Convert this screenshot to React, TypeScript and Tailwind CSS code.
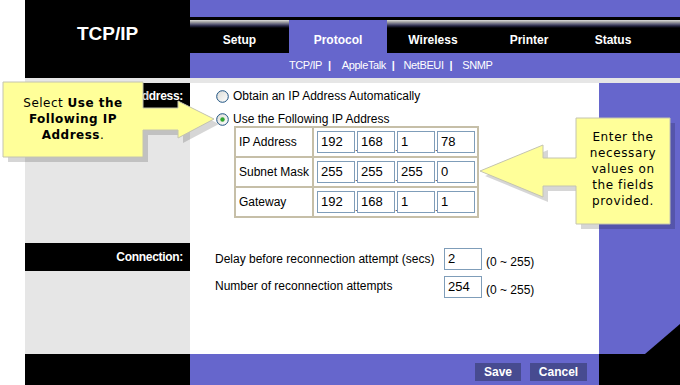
import type { ReactNode } from "react";

const tabs = [
  { label: "Setup", w: "w-[99px]", active: false },
  { label: "Protocol", w: "w-[98px]", active: true },
  { label: "Wireless", w: "w-[92px]", active: false },
  { label: "Printer", w: "w-[100px]", active: false },
  { label: "Status", w: "w-[68px]", active: false },
];

const ipRows = [
  { label: "IP Address", values: ["192", "168", "1", "78"] },
  { label: "Subnet Mask", values: ["255", "255", "255", "0"] },
  { label: "Gateway", values: ["192", "168", "1", "1"] },
];

function Radio({ checked }: { checked?: boolean }) {
  return (
    <svg width="13" height="13" viewBox="0 0 13 13" className="shrink-0">
      <defs>
        <linearGradient id={checked ? "rg1" : "rg0"} x1="0" y1="0" x2="1" y2="1">
          <stop offset="0" stopColor="#dcdcd6" />
          <stop offset="1" stopColor="#ffffff" />
        </linearGradient>
      </defs>
      <circle cx="6.5" cy="6.5" r="5.8" fill={`url(#${checked ? "rg1" : "rg0"})`} stroke="#1c5180" strokeWidth="1" />
      {checked ? <circle cx="6.5" cy="6.5" r="2.2" fill="#2fa52f" /> : null}
    </svg>
  );
}

function Field({ value, width = "w-[38px]" }: { value: string; width?: string }) {
  return (
    <div
      className={`${width} h-[22px] border border-[#7f9db9] bg-white pl-[3px] text-[13px] leading-[20px] text-black`}
    >
      {value}
    </div>
  );
}

function Callout({ children }: { children: ReactNode }) {
  return <>{children}</>;
}

export default function App() {
  return (
    <div className="flex h-[385px] w-[680px] overflow-hidden bg-white font-['Liberation_Sans',Arial,sans-serif] text-[12px] text-black relative">
      <div className="w-[25px] shrink-0 bg-white" />
      <div className="flex w-[655px] flex-col">
        {/* header */}
        <div className="flex h-[78px]">
          <div className="flex w-[165px] items-center justify-center bg-black pb-[10px] text-[19px] font-bold text-white">
            TCP/IP
          </div>
          <div className="flex w-[490px] flex-col">
            <div className="h-[17px] bg-[#6666cc]" />
            <div className="h-[3px] bg-black" />
            <div className="flex h-[33px] bg-black">
              {tabs.map((t) => (
                <div
                  key={t.label}
                  className={`${t.w} flex items-center justify-center pt-[7px] text-[12px] font-bold text-white ${
                    t.active
                      ? "bg-[#6666cc]"
                      : "bg-[linear-gradient(to_bottom,#dcdcdc_0px,#a4a4a4_2px,#64647e_4px,#23233f_6px,#000000_8px)]"
                  }`}
                >
                  {t.label}
                </div>
              ))}
              <div className="flex-1 bg-[linear-gradient(to_bottom,#dcdcdc_0px,#a4a4a4_2px,#64647e_4px,#23233f_6px,#000000_8px)]" />
            </div>
            <div className="flex h-[25px] items-start bg-[#6666cc] pl-[99px] pt-[4px] text-[11px] tracking-[-0.4px] text-white">
              <span>TCP/IP</span>
              <span className="ml-[6px] font-bold">|</span>
              <span className="ml-[11px]">AppleTalk</span>
              <span className="ml-[6px] font-bold">|</span>
              <span className="ml-[9px]">NetBEUI</span>
              <span className="ml-[6px] font-bold">|</span>
              <span className="ml-[10px]">SNMP</span>
            </div>
          </div>
        </div>

        {/* strip */}
        <div className="h-[5px] bg-[#e6e6e6]" />

        {/* body */}
        <div className="grid h-[271px] grid-cols-[165px_409px_81px]">
          <div className="flex flex-col bg-[#e6e6e6]">
            <div className="flex h-[26px] items-center justify-end bg-black pr-[7px] text-[12px] font-bold tracking-[-0.3px] text-white">
              IP Address:
            </div>
            <div className="h-[134px]" />
            <div className="flex h-[28px] items-center justify-end bg-black pr-[7px] text-[12px] font-bold tracking-[-0.3px] text-white">
              Connection:
            </div>
          </div>

          <div className="flex flex-col bg-white pl-[26px] pt-[6px]">
            <div className="flex h-[14px] items-center gap-[4px]">
              <Radio />
              <span>Obtain an IP Address Automatically</span>
            </div>
            <div className="mt-[9px] flex h-[14px] items-center gap-[4px]">
              <Radio checked />
              <span>Use the Following IP Address</span>
            </div>
            <table className="ml-[18px] w-[245px] border-collapse border-2 border-[#c6bfa8]">
              <tbody>
                {ipRows.map((r) => (
                  <tr key={r.label} className="h-[30px]">
                    <td className="w-[78px] border-2 border-[#c6bfa8] pl-[3px] leading-none">{r.label}</td>
                    <td className="border-2 border-[#c6bfa8] pl-[3px]">
                      <div className="flex items-end">
                        {r.values.map((v, i) => (
                          <div key={i} className="flex items-end">
                            {i > 0 ? <span className="w-[2px] text-[9px] leading-[10px]">.</span> : null}
                            <Field value={v} />
                          </div>
                        ))}
                      </div>
                    </td>
                  </tr>
                ))}
              </tbody>
            </table>

            <div className="ml-[-1px] mt-[30px] flex h-[22px] items-center">
              <span className="w-[229px]">Delay before reconnection attempt (secs)</span>
              <Field value="2" />
              <span className="ml-[4px] mt-[6px]">(0 ~ 255)</span>
            </div>
            <div className="ml-[-1px] mt-[6px] flex h-[22px] items-center">
              <span className="w-[229px] mb-[2px]">Number of reconnection attempts</span>
              <Field value="254" />
              <span className="ml-[4px] mt-[6px]">(0 ~ 255)</span>
            </div>
          </div>

          <div className="flex flex-col bg-[#6666cc]">
            <svg className="mt-auto" width="81" height="30" viewBox="0 0 81 30">
              <polygon points="46,30 81,0 81,30" fill="#000" />
            </svg>
          </div>
        </div>

        {/* footer */}
        <div className="grid h-[31px] grid-cols-[165px_409px_81px]">
          <div className="bg-black" />
          <div className="flex items-start justify-end gap-[9px] bg-[#6666cc] pr-[12px] pt-[9px]">
            <div className="flex h-[18px] w-[46px] items-center justify-center bg-[#474b90] text-[12px] font-bold text-white">
              Save
            </div>
            <div className="flex h-[18px] w-[57px] items-center justify-center bg-[#474b90] text-[12px] font-bold text-white">
              Cancel
            </div>
          </div>
          <div className="bg-black" />
        </div>
      </div>

      {/* callouts */}
      <Callout>
        <svg className="absolute left-0 top-0" width="680" height="385" viewBox="0 0 680 385">
          <polygon
            points="8,87 148,87 148,113 183,113 183,106 219,124 183,143 183,135 148,135 148,162 8,162"
            fill="#000"
            opacity="0.16"
          />
          <polygon
            points="3,82 143,82 143,108 178,108 178,101 214,119 178,138 178,130 143,130 143,157 3,157"
            fill="#ffff99"
            stroke="#c4c4b0"
            strokeWidth="1"
          />
          <polygon
            points="581,123 675,123 675,229 581,229 581,191 548,191 548,202 485,176 548,150 548,163 581,163"
            fill="#000"
            opacity="0.16"
          />
          <polygon
            points="576,118 670,118 670,224 576,224 576,186 543,186 543,197 480,171 543,145 543,158 576,158"
            fill="#ffff99"
            stroke="#c4c4b0"
            strokeWidth="1"
          />
        </svg>
        <div className="absolute left-[3px] top-[95px] w-[140px] text-center font-['DejaVu_Sans',Verdana,sans-serif] text-[12px] leading-[16px] tracking-[0.5px] text-black">
          Select <b>Use the</b>
          <br />
          <b>Following IP</b>
          <br />
          <b>Address</b>.
        </div>
        <div className="absolute left-[576px] top-[129px] w-[94px] text-center font-['DejaVu_Sans',Verdana,sans-serif] text-[12px] leading-[16px] tracking-[0.6px] text-black">
          Enter the
          <br />
          necessary
          <br />
          values on
          <br />
          the fields
          <br />
          provided.
        </div>
      </Callout>
    </div>
  );
}
